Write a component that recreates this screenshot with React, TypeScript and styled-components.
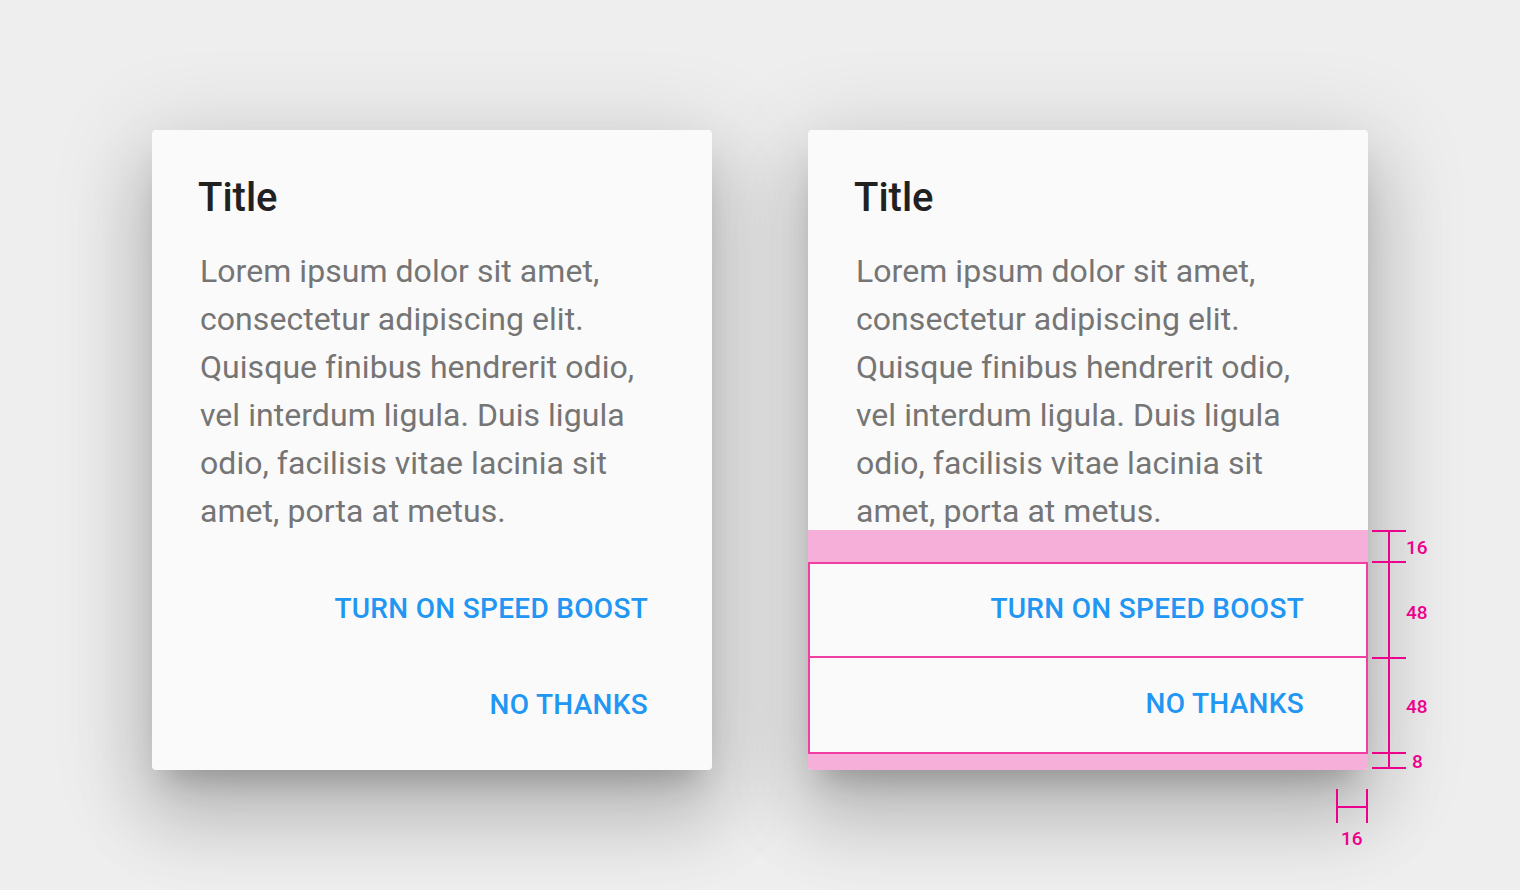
import React from "react";
import styled, { createGlobalStyle, css } from "styled-components";

const PINK = "#ec008c";
const PINK_FILL = "#f5afd8";
const PINK_LINE = "#ef3fa3";

const GlobalStyle = createGlobalStyle`
  html, body {
    margin: 0;
    padding: 0;
    background: #eeeeee;
  }
  body {
    font-family: Roboto, "Liberation Sans", sans-serif;
    -webkit-font-smoothing: antialiased;
  }
`;

const Page = styled.div`
  width: 1520px;
  height: 890px;
  box-sizing: border-box;
  padding-top: 130px;
  display: flex;
  justify-content: center;
  align-items: flex-start;
  gap: 96px;
  background: #eeeeee;
  overflow: hidden;
`;

const Card = styled.div`
  position: relative;
  width: 560px;
  background: #fafafa;
  border-radius: 4px;
  display: flex;
  flex-direction: column;
  box-shadow: 0 22px 30px -14px rgba(0, 0, 0, 0.22),
    0 48px 76px 6px rgba(0, 0, 0, 0.14), 0 18px 92px 16px rgba(0, 0, 0, 0.12);
`;

const Content = styled.div`
  padding: 48px 48px 0 48px;
  display: flex;
  flex-direction: column;
`;

const Title = styled.h2`
  margin: 0 0 0 -2px;
  font-family: Roboto, "Liberation Sans", sans-serif;
  font-weight: 500;
  font-size: 40px;
  line-height: 40px;
  color: #212121;
`;

const Body = styled.p`
  margin: 29px 0 -5px 0;
  font-family: Roboto, "Liberation Sans", sans-serif;
  font-weight: 400;
  font-size: 32px;
  line-height: 48px;
  letter-spacing: 0.05px;
  color: #757575;
`;

const Actions = styled.div<{ $annotated?: boolean }>`
  padding: 32px 0 16px 0;
  display: flex;
  flex-direction: column;
  border-radius: 0 0 4px 4px;
  ${(p) =>
    p.$annotated &&
    css`
      background: ${PINK_FILL};
    `}
`;

const ActionButton = styled.button<{ $annotated?: boolean }>`
  height: 96px;
  box-sizing: border-box;
  display: flex;
  align-items: center;
  justify-content: flex-end;
  padding: 0 64px 3px 0;
  margin: 0;
  background: #fafafa;
  border: none;
  font-family: Roboto, "Liberation Sans", sans-serif;
  font-weight: 500;
  font-size: 28px;
  letter-spacing: 0.3px;
  color: #2196f3;
  text-transform: uppercase;
  cursor: pointer;
  ${(p) =>
    p.$annotated &&
    css`
      border: 2px solid ${PINK_LINE};
      padding-right: 62px;
      & + & {
        border-top: none;
      }
    `}
`;

const VMeasure = styled.div`
  position: absolute;
  left: 564px;
  top: 400px;
  width: 80px;
  height: 240px;
`;

const HMeasure = styled.div`
  position: absolute;
  left: 527px;
  top: 658px;
  width: 34px;
  height: 60px;
`;

const MeasureLabel = styled.span`
  position: absolute;
  font-family: Roboto, "Liberation Sans", sans-serif;
  font-weight: 500;
  font-size: 19px;
  line-height: 20px;
  color: ${PINK};
`;

const Annotations = () => (
  <>
    <VMeasure>
      <svg width="80" height="240" viewBox="0 0 80 240">
        <g stroke={PINK} strokeWidth="2" fill="none">
          <line x1="17" y1="1" x2="17" y2="239" />
          <line x1="0" y1="1" x2="34" y2="1" />
          <line x1="0" y1="32" x2="34" y2="32" />
          <line x1="0" y1="128" x2="34" y2="128" />
          <line x1="0" y1="223" x2="34" y2="223" />
          <line x1="0" y1="238" x2="34" y2="238" />
        </g>
      </svg>
      <MeasureLabel style={{ left: 34, top: 8 }}>16</MeasureLabel>
      <MeasureLabel style={{ left: 34, top: 73 }}>48</MeasureLabel>
      <MeasureLabel style={{ left: 34, top: 167 }}>48</MeasureLabel>
      <MeasureLabel style={{ left: 40, top: 222 }}>8</MeasureLabel>
    </VMeasure>
    <HMeasure>
      <svg width="34" height="36" viewBox="0 0 34 36">
        <g stroke={PINK} strokeWidth="2" fill="none">
          <line x1="2" y1="1" x2="2" y2="35" />
          <line x1="32" y1="1" x2="32" y2="35" />
          <line x1="2" y1="19" x2="32" y2="19" />
        </g>
      </svg>
      <MeasureLabel style={{ left: 6, top: 41 }}>16</MeasureLabel>
    </HMeasure>
  </>
);

const Dialog = ({ annotated }: { annotated?: boolean }) => (
  <Card>
    <Content>
      <Title>Title</Title>
      <Body>
        Lorem ipsum dolor sit amet, consectetur adipiscing elit. Quisque
        finibus hendrerit odio, vel interdum ligula. Duis ligula odio,
        facilisis vitae lacinia sit amet, porta at metus.
      </Body>
    </Content>
    <Actions $annotated={annotated}>
      <ActionButton $annotated={annotated}>Turn on speed boost</ActionButton>
      <ActionButton $annotated={annotated}>No thanks</ActionButton>
    </Actions>
    {annotated && <Annotations />}
  </Card>
);

export default function App() {
  return (
    <>
      <GlobalStyle />
      <Page>
        <Dialog />
        <Dialog annotated />
      </Page>
    </>
  );
}
